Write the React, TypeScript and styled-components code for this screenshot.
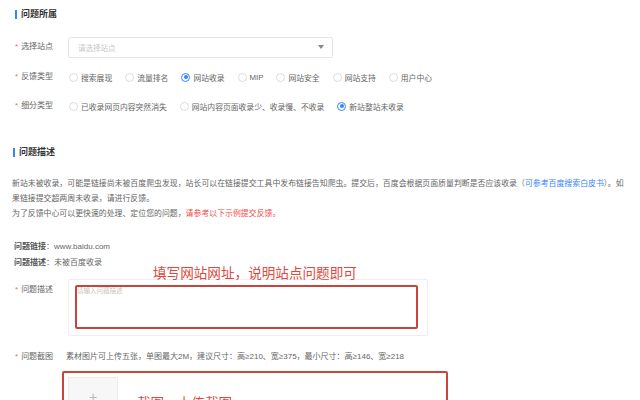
import React from "react";
import styled, { createGlobalStyle } from "styled-components";

const Global = createGlobalStyle`
  html, body { margin: 0; padding: 0; background: #fff; }
  body { font-family: "Liberation Sans", "Noto Sans CJK SC", sans-serif; color: #666; }
  * { box-sizing: border-box; }
`;

const Page = styled.div`
  width: 640px;
  height: 400px;
  overflow: hidden;
  padding: 8px 0 0 13px;
`;

const Title = styled.div<{ $indent?: number }>`
  display: flex;
  align-items: center;
  gap: 4px;
  height: 12px;
  padding-left: ${(p) => p.$indent ?? 0}px;
  font-size: 9px;
  font-weight: 600;
  color: #333;
  line-height: 12px;
`;

const Bar = styled.span`
  width: 2px;
  height: 9px;
  background: #3385ff;
`;

const Row = styled.div<{ $mt: number }>`
  display: flex;
  align-items: center;
  height: 22px;
  margin-top: ${(p) => p.$mt}px;
`;

const Label = styled.div<{ $top?: boolean }>`
  width: 55px;
  flex: none;
  padding-left: 2px;
  font-size: 8px;
  line-height: 12px;
  color: #666;
  align-self: ${(p) => (p.$top ? "flex-start" : "center")};
  padding-top: ${(p) => (p.$top ? 5 : 0)}px;
  white-space: nowrap;
`;

const Star = styled.span`
  color: #f56c6c;
  margin-right: 3px;
`;

const Select = styled.div`
  width: 265px;
  height: 21px;
  border: 1px solid #e6e6e6;
  border-radius: 2px;
  display: flex;
  align-items: center;
  justify-content: space-between;
  padding: 0 8px 0 9px;
  font-size: 7.5px;
  color: #c8c8c8;
`;

const Caret = styled.span`
  width: 0;
  height: 0;
  border-left: 3.5px solid transparent;
  border-right: 3.5px solid transparent;
  border-top: 4px solid #888;
`;

const Radios = styled.div`
  display: flex;
  align-items: center;
  gap: 13px;
  padding-left: 1px;
`;

const RadioItem = styled.label`
  display: flex;
  align-items: center;
  gap: 3px;
  font-size: 7.8px;
  color: #666;
  white-space: nowrap;
`;

const Circle = styled.span<{ $on?: boolean }>`
  width: 9px;
  height: 9px;
  border-radius: 50%;
  border: 1px solid ${(p) => (p.$on ? "#3385ff" : "#dcdcdc")};
  display: flex;
  align-items: center;
  justify-content: center;
  &::after {
    content: "";
    width: 4px;
    height: 4px;
    border-radius: 50%;
    background: ${(p) => (p.$on ? "#3385ff" : "transparent")};
  }
`;

const Para = styled.div`
  margin-top: 17px;
  font-family: "Noto Sans CJK SC", sans-serif;
  font-size: 7.9px;
  line-height: 15px;
  color: #666;
  white-space: nowrap;
  margin-left: -1px;
`;

const Link = styled.span`
  color: #3385ff;
`;

const Warn = styled.span`
  color: #f04c4c;
`;

const Info = styled.div<{ $mt: number }>`
  margin-top: ${(p) => p.$mt}px;
  font-size: 8px;
  line-height: 16px;
  color: #666;
  white-space: nowrap;
  padding-left: 1px;
`;

const InfoKey = styled.span`
  color: #555;
  font-weight: 600;
`;

const FieldRow = styled.div<{ $mt: number }>`
  display: flex;
  margin-top: ${(p) => p.$mt}px;
`;

const TextBox = styled.div`
  position: relative;
  width: 360px;
  height: 57px;
  border: 1px solid #eeeeee;
  border-radius: 2px;
  padding: 6px 8px;
  font-size: 6.5px;
  color: #c4c4c4;
  line-height: 9px;
`;

const Mark = styled.div<{ $l: number; $t: number; $w: number; $h: number }>`
  position: absolute;
  left: ${(p) => p.$l}px;
  top: ${(p) => p.$t}px;
  width: ${(p) => p.$w}px;
  height: ${(p) => p.$h}px;
  border: 2px solid #c9453c;
  border-radius: 2px;
`;

const Note = styled.div<{ $l: number; $t: number }>`
  position: absolute;
  left: ${(p) => p.$l}px;
  top: ${(p) => p.$t}px;
  font-family: "Noto Sans CJK SC", sans-serif;
  font-size: 13.6px;
  line-height: 16px;
  color: #e0483d;
  white-space: nowrap;
`;

const Hint = styled.div`
  font-size: 8px;
  line-height: 12px;
  color: #666;
  white-space: nowrap;
  margin-left: -2px;
`;

const Upload = styled.div`
  position: relative;
  margin: 14px 0 0 55px;
`;

const UploadTile = styled.div`
  width: 50px;
  height: 50px;
  background: #f7f7f7;
  border: 1px solid #ececec;
  display: flex;
  justify-content: center;
  padding-top: 12px;
  font-size: 14px;
  color: #bbb;
  line-height: 14px;
`;

export default function App() {
  return (
    <>
      <Global />
      <Page>
        <Title $indent={2}>
          <Bar />
          问题所属
        </Title>
        <Row $mt={16}>
          <Label>
            <Star>*</Star>选择站点
          </Label>
          <Select>
            请选择站点
            <Caret />
          </Select>
        </Row>
        <Row $mt={8}>
          <Label>
            <Star>*</Star>反馈类型
          </Label>
          <Radios>
            <RadioItem><Circle />搜索展现</RadioItem>
            <RadioItem><Circle />流量排名</RadioItem>
            <RadioItem><Circle $on />网站收录</RadioItem>
            <RadioItem><Circle />MIP</RadioItem>
            <RadioItem><Circle />网站安全</RadioItem>
            <RadioItem><Circle />网站支持</RadioItem>
            <RadioItem><Circle />用户中心</RadioItem>
          </Radios>
        </Row>
        <Row $mt={7}>
          <Label>
            <Star>*</Star>细分类型
          </Label>
          <Radios>
            <RadioItem><Circle />已收录网页内容突然消失</RadioItem>
            <RadioItem><Circle />网站内容页面收录少、收录慢、不收录</RadioItem>
            <RadioItem><Circle $on />新站整站未收录</RadioItem>
          </Radios>
        </Row>
        <div style={{ height: 29 }} />
        <Title>
          <Bar />
          问题描述
        </Title>
        <Para>
          <div>
            新站未被收录，可能是链接尚未被百度爬虫发现，站长可以在链接提交工具中发布链接告知爬虫。提交后，百度会根据页面质量判断是否应该收录（
            <Link>可参考百度搜索白皮书</Link>）。如
          </div>
          <div>果链接提交超两周未收录，请进行反馈。</div>
          <div>
            为了反馈中心可以更快速的处理、定位您的问题，<Warn>请参考以下示例提交反馈。</Warn>
          </div>
        </Para>
        <Info $mt={19}>
          <InfoKey>问题链接</InfoKey>：www.baidu.com
        </Info>
        <Info $mt={0}>
          <InfoKey>问题描述</InfoKey>：未被百度收录
        </Info>
        <FieldRow $mt={8}>
          <Label $top>
            <Star>*</Star>问题描述
          </Label>
          <TextBox>
            请输入问题描述
            <Note $l={84} $t={-16}>填写网站网址，说明站点问题即可</Note>
            <Mark $l={6} $t={5} $w={343} $h={44} />
          </TextBox>
        </FieldRow>
        <FieldRow $mt={15}>
          <Label>
            <Star>*</Star>问题截图
          </Label>
          <Hint>素材图片可上传五张，单图最大2M，建议尺寸：高≥210、宽≥375，最小尺寸：高≥146、宽≥218</Hint>
        </FieldRow>
        <Upload>
          <UploadTile>+</UploadTile>
          <Mark $l={-6} $t={-6} $w={386} $h={60} />
          <Note $l={69} $t={17}>截图，上传截图</Note>
        </Upload>
      </Page>
    </>
  );
}
